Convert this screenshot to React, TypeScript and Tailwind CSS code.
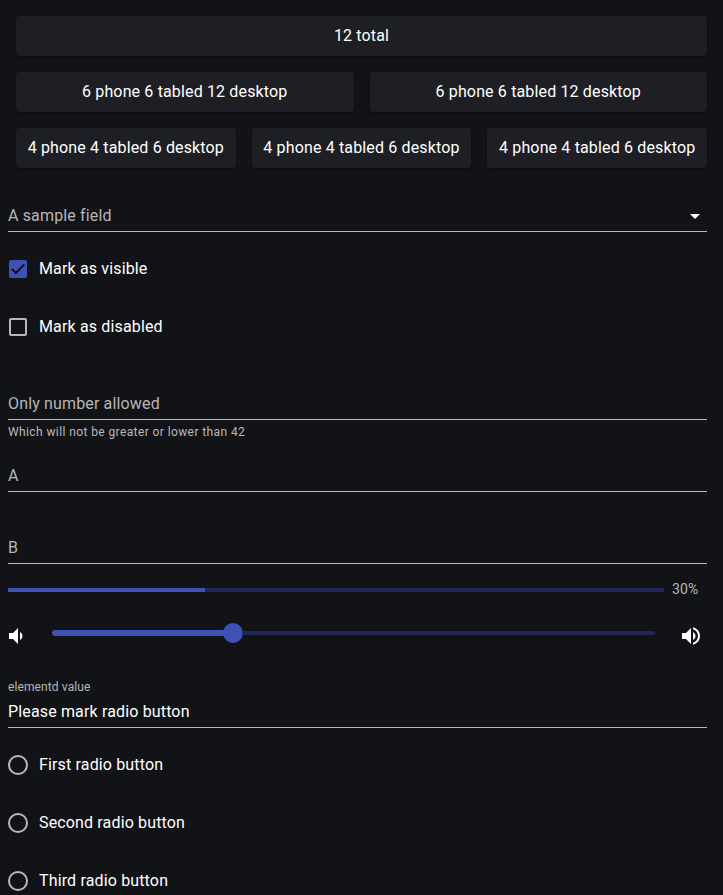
import React from "react";

function Cell({ children }: { children: string }) {
  return (
    <div className="flex h-10 flex-1 items-center justify-center rounded bg-[#1e1f24] whitespace-nowrap shadow-[0_1px_2px_rgba(0,0,0,0.4)]">
      {children}
    </div>
  );
}

function Field({ label }: { label: string }) {
  return <div className="h-8 border-b border-[#b8b9ba] pt-1 text-[#b6b6b8]">{label}</div>;
}

function Radio({ label }: { label: string }) {
  return (
    <label className="flex h-[58px] items-start">
      <span className="mt-[3px] mr-[11px] h-5 w-5 rounded-full border-2 border-[#b8b9ba]" />
      <span className="mt-px">{label}</span>
    </label>
  );
}

function Check({ label, checked }: { label: string; checked?: boolean }) {
  return (
    <label className="flex h-[58px] items-start">
      <svg className="mt-px mr-[9px] -ml-[2px] h-6 w-6" viewBox="0 0 24 24">
        {checked ? (
          <>
            <rect x="3" y="3" width="18" height="18" rx="2" fill="#3f51b5" />
            <path d="M5.8 11.9l4.1 4.1 8.4-8.6" fill="none" stroke="#121317" strokeWidth="2" />
          </>
        ) : (
          <rect x="4" y="4" width="16" height="16" rx="1" fill="none" stroke="#b8b9ba" strokeWidth="2" />
        )}
      </svg>
      <span className="mt-px">{label}</span>
    </label>
  );
}

export default function App() {
  return (
    <div className="h-[895px] overflow-hidden bg-[#121317] font-[Roboto,sans-serif] text-base leading-6 font-normal tracking-[0.15px] text-white">
      <div className="flex flex-col gap-4 p-4">
        <div className="flex"><Cell>12 total</Cell></div>
        <div className="flex gap-4">
          <Cell>6 phone 6 tabled 12 desktop</Cell>
          <Cell>6 phone 6 tabled 12 desktop</Cell>
        </div>
        <div className="flex gap-4">
          <Cell>4 phone 4 tabled 6 desktop</Cell>
          <Cell>4 phone 4 tabled 6 desktop</Cell>
          <Cell>4 phone 4 tabled 6 desktop</Cell>
        </div>
      </div>

      <div className="mr-4 ml-2">
        <div className="mt-4 flex h-8 justify-between border-b border-[#b8b9ba] pt-1 text-[#b6b6b8]">
          A sample field
          <svg className="h-6 w-6" viewBox="0 0 24 24"><path fill="#fff" d="M7 10l5 5 5-5z" /></svg>
        </div>

        <div className="pt-6">
          <Check label="Mark as visible" checked />
          <Check label="Mark as disabled" />
        </div>

        <div className="pt-4"><Field label="Only number allowed" /></div>
        <div className="h-6 text-xs leading-6 tracking-[0.4px] text-[#b8b8ba]">Which will not be greater or lower than 42</div>
        <div className="pt-4"><Field label="A" /></div>
        <div className="pt-10"><Field label="B" /></div>

        <div className="mt-4 flex h-5 items-center">
          <div className="h-1 w-[656px] bg-[#202859]"><div className="h-full w-[30%] bg-[#3f51b5]" /></div>
          <span className="mb-0.5 ml-2 text-sm leading-5 text-[#b8b8ba]">30%</span>
        </div>

        <div className="mt-[23px] flex h-5 items-center">
          <svg className="mt-[6px] -ml-1 h-6 w-6 shrink-0" viewBox="0 0 24 24" fill="#fff">
            <path d="M18.5 12c0-1.77-1.02-3.29-2.5-4.03v8.05c1.48-.73 2.5-2.25 2.5-4.02zM5 9v6h4l5 5V4L9 9H5z" />
          </svg>
          <div className="ml-6 flex w-[603px] shrink-0 items-center">
            <div className="h-1.5 w-[172px] rounded-l-[3px] bg-[#3f51b5]" />
            <div className="-ml-px h-5 w-5 rounded-full bg-[#3f51b5]" />
            <div className="-ml-px h-1 flex-1 rounded-r-[2px] bg-[#202859]" />
          </div>
          <svg className="mt-[6px] ml-6 h-6 w-6 shrink-0" viewBox="0 0 24 24" fill="#fff">
            <path d="M3 9v6h4l5 5V4L7 9H3zm13.5 3c0-1.77-1.02-3.29-2.5-4.03v8.05c1.48-.73 2.5-2.25 2.5-4.02zM14 3.23v2.06c2.89.86 5 3.54 5 6.71s-2.11 5.85-5 6.71v2.06c4.01-.91 7-4.49 7-8.77s-2.99-7.86-7-8.77z" />
          </svg>
        </div>

        <div className="mt-8 h-[53px] border-b border-[#b8b9ba]">
          <div className="pt-0.5 text-xs leading-5 tracking-[0.11px] text-[#b6b6b8]">elementd value</div>
          <div className="pt-[3px]">Please mark radio button</div>
        </div>

        <div className="pt-6">
          <Radio label="First radio button" />
          <Radio label="Second radio button" />
          <Radio label="Third radio button" />
        </div>
      </div>
    </div>
  );
}
